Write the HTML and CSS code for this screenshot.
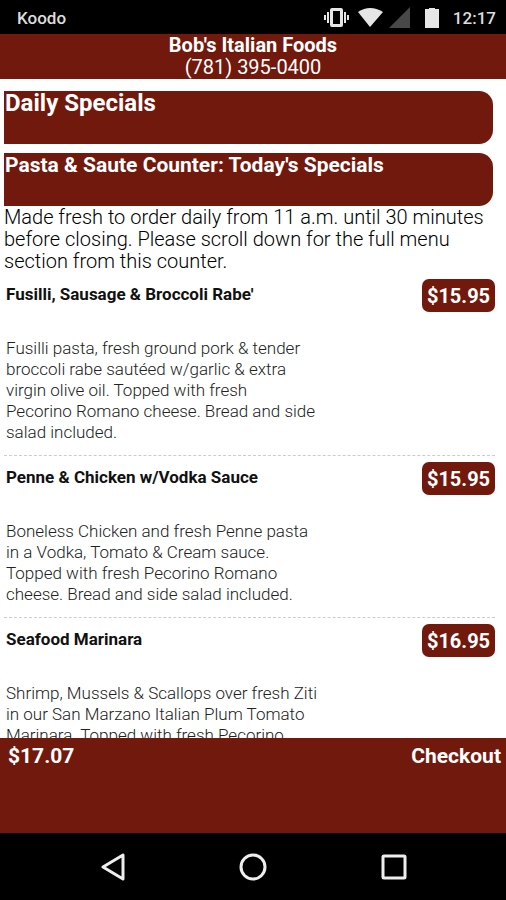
FILE: index.html
```
<!DOCTYPE html>
<html lang="en">
<head>
<meta charset="UTF-8">
<meta name="viewport" content="width=device-width, initial-scale=1.0">
<title>Bob's Italian Foods</title>
<link rel="stylesheet" href="styles.css">
</head>
<body>

<div class="status-bar">
  <span class="carrier">Koodo</span>
  <!-- vibrate, wifi, signal, battery -->
  <svg class="status-icons" width="118" height="22" viewBox="0 0 118 22">
    <g fill="#e6e6e6">
      <path fill-rule="evenodd" d="M9 1h9a2 2 0 0 1 2 2v15a2 2 0 0 1-2 2H9a2 2 0 0 1-2-2V3a2 2 0 0 1 2-2zm1 3v13h7V4z"/>
      <path d="M4 5h2v11H4zM1 8h2v5H1zM21 5h2v11h-2zM24 8h2v5h-2z"/>
      <path d="M35 5Q47-3 60 5L47 20z"/>
      <path d="M106 1h6v1h4v19h-14V2h4z"/>
    </g>
    <path fill="#484848" d="M87 0v21H66z"/>
  </svg>
  <span class="clock">12:17</span>
</div>

<header class="header">
  <h1>Bob's Italian Foods</h1>
  <a href="tel:7813950400">(781) 395-0400</a>
</header>

<main class="content">
  <h2 class="banner banner-large">Daily Specials</h2>
  <h2 class="banner">Pasta &amp; Saute Counter: Today's Specials</h2>
  <p class="intro">Made fresh to order daily from 11 a.m. until 30 minutes before closing. Please scroll down for the full menu section from this counter.</p>

  <!-- Menu items -->
  <div class="item">
    <div class="item-text">
      <h3>Fusilli, Sausage &amp; Broccoli Rabe'</h3>
      <p>Fusilli pasta, fresh ground pork &amp; tender broccoli rabe sautéed w/garlic &amp; extra virgin olive oil. Topped with fresh<br>Pecorino Romano cheese. Bread and side salad included.</p>
    </div>
    <button class="price">$15.95</button>
  </div>
  <div class="item">
    <div class="item-text">
      <h3>Penne &amp; Chicken w/Vodka Sauce</h3>
      <p>Boneless Chicken and fresh Penne pasta in a Vodka, Tomato &amp; Cream sauce. Topped with fresh Pecorino Romano cheese. Bread and side salad included.</p>
    </div>
    <button class="price">$15.95</button>
  </div>
  <div class="item">
    <div class="item-text">
      <h3>Seafood Marinara</h3>
      <p>Shrimp, Mussels &amp; Scallops over fresh Ziti in our San Marzano Italian Plum Tomato Marinara. Topped with fresh Pecorino</p>
    </div>
    <button class="price">$16.95</button>
  </div>
</main>

<div class="cart-bar">
  <span>$17.07</span>
  <button class="checkout">Checkout</button>
</div>

<nav class="nav-bar">
  <button aria-label="Back">
    <svg width="28" height="28" viewBox="0 0 28 28"><path d="M25 2v24L5 14z"/></svg>
  </button>
  <button aria-label="Home">
    <svg width="28" height="28" viewBox="0 0 28 28"><circle cx="14" cy="14" r="12"/></svg>
  </button>
  <button aria-label="Recent apps">
    <svg width="28" height="28" viewBox="0 0 28 28"><rect x="3" y="3" width="22" height="22" rx="1"/></svg>
  </button>
</nav>

</body>
</html>
```
FILE: styles.css
```
body, html {
  height: 100%;
  margin: 0;
}
body {
  display: flex;
  flex-direction: column;
  background-color: #fff;
  font-family: Roboto, sans-serif;
}
h1, h2, h3, p {
  margin: 0;
}
button {
  border: 0;
  padding: 0;
  background: none;
  color: #fff;
  font-family: inherit;
}
.status-bar {
  display: flex;
  align-items: center;
  height: 34px;
  padding: 2px 10px 0 17px;
  box-sizing: border-box;
  background-color: #000;
  color: #ddd;
  font-size: 17px;
  font-weight: 500;
}
.carrier {
  flex: 1;
}
.status-icons {
  margin-right: 12px;
}
.header {
  padding-bottom: 1px;
  background-color: #72190d;
  text-align: center;
  font-size: 20px;
  line-height: 22px;
}
.header h1 {
  font-size: 20px;
  font-weight: 700;
  color: #fff;
}
.header a {
  display: block;
  color: #fff;
  text-decoration: none;
}
.content {
  flex: 1;
  min-height: 0;
  overflow: hidden;
  padding: 12px 11px 0 4px;
}
.banner {
  height: 53px;
  margin: 0 2px 9px 0;
  padding-left: 1px;
  box-sizing: border-box;
  border-radius: 0 14px 14px 0;
  background-color: #72190d;
  color: #fff;
  font-size: 21px;
  line-height: 25px;
}
.banner-large {
  font-size: 24px;
}
.intro {
  margin-top: -9px;
  padding-bottom: 1px;
  color: #000;
  font-size: 20px;
  font-weight: 300;
  line-height: 22px;
}
.item {
  display: flex;
  justify-content: space-between;
  align-items: flex-start;
  padding: 6px 0 12px 2px;
  border-bottom: 1px dashed #ccc;
}
.item-text {
  width: 65%;
}
.item h3 {
  margin-bottom: 29px;
  color: #111;
  font-size: 17px;
  font-weight: 700;
  line-height: 30px;
  white-space: nowrap;
}
.item p {
  color: #222;
  font-size: 17px;
  font-weight: 300;
  line-height: 21px;
}
.price {
  width: 73px;
  height: 33px;
  border-radius: 7px;
  background-color: #72190d;
  font-size: 20px;
  font-weight: 700;
}
.cart-bar {
  display: flex;
  justify-content: space-between;
  align-items: flex-start;
  height: 95px;
  padding: 6px 5px 0 8px;
  box-sizing: border-box;
  background-color: #72190d;
  color: #fff;
  font-size: 21px;
  font-weight: 700;
  line-height: 24px;
}
.checkout {
  font-size: 21px;
  font-weight: 700;
  line-height: 24px;
}
.nav-bar {
  display: flex;
  justify-content: space-between;
  align-items: center;
  height: 67px;
  padding: 0 98px;
  box-sizing: border-box;
  background-color: #000;
}
.nav-bar svg {
  display: block;
  fill: none;
  stroke: #eee;
  stroke-width: 3;
  stroke-linejoin: round;
}
```
